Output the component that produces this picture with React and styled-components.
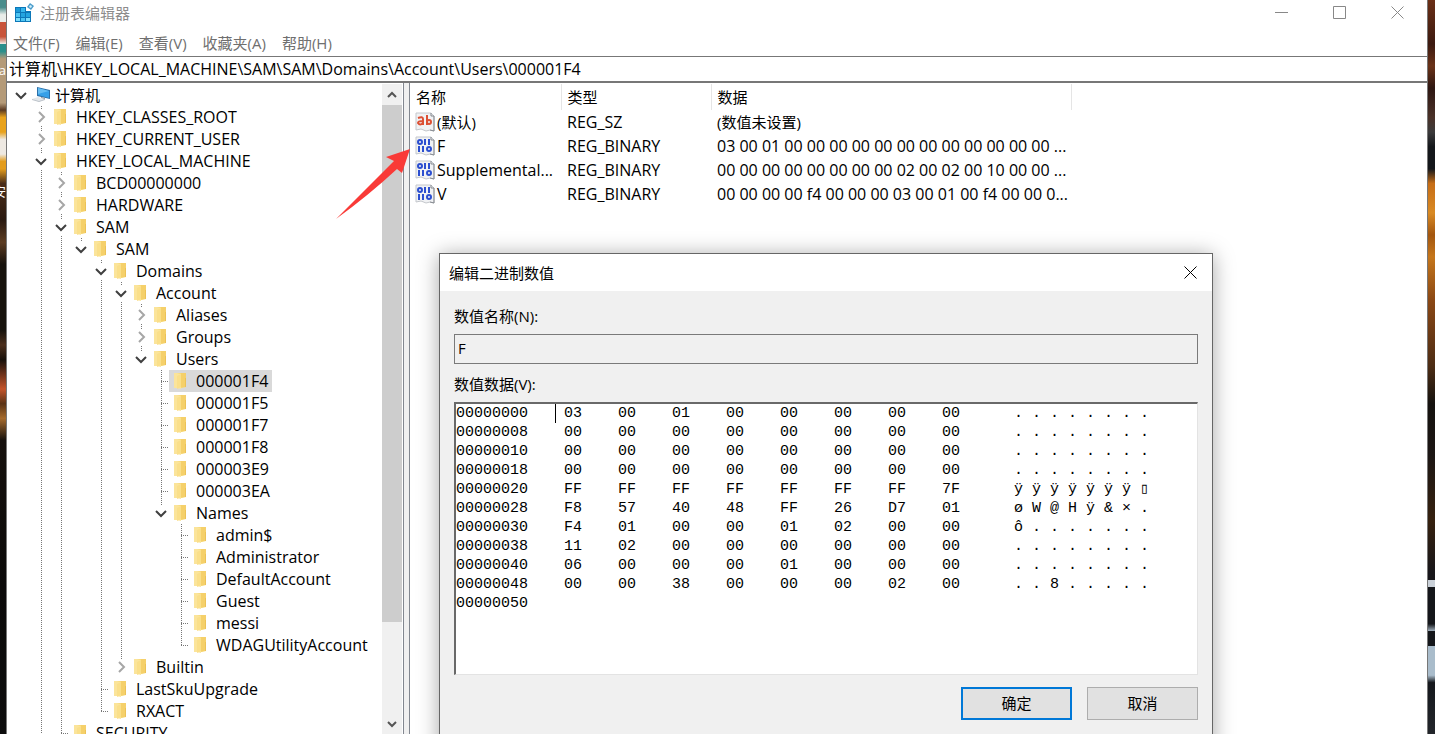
import React from 'react';
import styled, { createGlobalStyle, css } from "styled-components"

const GlobalStyle = createGlobalStyle`
  * {
    box-sizing: border-box;
  }

  body {
    margin: 0;
    background: #120e0b;
  }

  body, button, input {
    font-family: "Open Sans", "Noto Sans CJK SC", sans-serif;
    font-size: 15px;
    color: #000;
  }
`

const Desktop = styled.div`
  display: grid;
  grid-template-columns: 6px minmax(0, 1fr) 7px;
  height: 100vh;
  overflow: hidden;
`

const LeftWallpaper = styled.div`
  display: flex;
  flex-direction: column;
  align-items: flex-end;
  overflow: hidden;
  padding-top: 60px;
  gap: 101px;
  color: #fff;
  background: linear-gradient(
    #4a8d8c 0 1%, #e9ede9 2% 3%, #c8543a 3% 5%, #f0eeea 6%, #2a8f8c 6% 7%,
    #b49a78 8% 14%, #5b3a22 15%, #e8a21c 16% 18%, #eee9e2 19% 21%, #e39c1c 22% 23%,
    #4a2c18 25%, #2a1a10 30%, #5c3c22 33%, #17120c 36% 45%, #4c2f1c 47%, #17100a 49%,
    #c3532a 53%, #5a3315 55%, #a56a2c 57%, #15100c 60%, #0b0a09 80%, #0d0d0d 100%
  );
`

const WallpaperLabel = styled.span`
  font-size: 13px;
  line-height: 20px;
`

const RightWallpaper = styled.div`
  background: linear-gradient(
    #6b2f16 0%, #3c1a10 6%, #6a3218 9%, #2e1712 12%, #4a3128 16%, #3b3a3b 18%, #14171b 20% 23%,
    #c66d16 25%, #d98a24 29%, #a3560f 32%, #c5761b 35%, #8a4714 41%, #4c2c14 50%,
    #15120f 55%, #1c1614 62%, #36210f 71%, #17161a 78%, #17161a 79%, #c9d0d8 79% 80%,
    #14161a 80% 85%, #a6b6c4 86%, #14161a 86% 88%, #a9bccb 88% 92%, #15181d 93%, #23262b 100%
  );
`

const Window = styled.main`
  position: relative;
  display: flex;
  flex-direction: column;
  min-height: 0;
  background: #fff;
  border-left: 1px solid #777;
  border-right: 1px solid #777;
`

const TitleBar = styled.header`
  display: flex;
  align-items: center;
  height: 26px;
  padding: 0 1px 1px 7px;
  color: #8c8c8c;
`

const AppTitle = styled.h1`
  flex: 1;
  margin: 0 0 0 6px;
  font-size: 15px;
  font-weight: 400;
  line-height: 20px;
`

const WindowButton = styled.button`
  display: flex;
  align-items: center;
  justify-content: center;
  width: 58px;
  height: 25px;
  padding: 0;
  border: 0;
  background: none;
`

const MenuBar = styled.nav`
  display: flex;
  align-items: center;
  gap: 16px;
  height: 30px;
  padding: 4px 6px 0;
`

const MenuButton = styled.button`
  padding: 0;
  border: 0;
  background: none;
  color: #6f6f6f;
  line-height: 20px;
`

const AddressInput = styled.input`
  width: 100%;
  height: 27px;
  padding: 0 2px 2px;
  border: 0;
  border-top: 1px solid #777;
  border-bottom: 2px solid #777;
  outline: 0;
  font-size: 16px;
`

const Body = styled.div`
  display: flex;
  flex: 1;
  min-height: 0;
`

const TreePane = styled.section`
  display: flex;
  width: 397px;
  flex-shrink: 0;
  border-right: 1px solid #828790;
`

const Tree = styled.ul`
  flex: 1;
  min-width: 0;
  margin: 0;
  padding: 1px 0 0 4px;
  overflow: hidden;
  list-style: none;
`

const TreeRow = styled.li`
  display: flex;
  height: 22px;
`

const dotsDown = "repeating-linear-gradient(to bottom, #777 0 1px, transparent 1px 2px)"
const dotsRight = "repeating-linear-gradient(to right, #777 0 1px, transparent 1px 2px)"

const Guide = styled.span`
  width: 20px;
  flex-shrink: 0;
  ${({ $line }) => $line && css`
    background: ${dotsDown} 10px 0 / 1px 100% no-repeat;
  `}
`

const Branch = styled.span`
  width: 18px;
  flex-shrink: 0;
  background:
    ${dotsDown} 10px 0 / 1px ${({ $last }) => $last ? "12px" : "100%"} no-repeat,
    ${dotsRight} 10px 11px / 8px 1px no-repeat;
`

const Toggle = styled.button`
  display: flex;
  align-items: center;
  justify-content: center;
  width: 18px;
  flex-shrink: 0;
  padding: 0 0 0 1px;
  border: 0;
  background:
    ${dotsDown} 10px 0 / 1px ${({ $root }) => $root ? "0" : "3px"} no-repeat,
    ${dotsDown} 10px 20px / 1px ${({ $last }) => $last ? "0" : "2px"} no-repeat;
`

const KeyButton = styled.button`
  display: flex;
  align-items: center;
  gap: ${({ $root }) => $root ? "5px" : "9px"};
  padding: 0 4px 0 ${({ $root }) => $root ? "3px" : "5px"};
  border: 0;
  background: ${({ $selected }) => $selected ? "#d9d9d9" : "none"};
  font-size: ${({ $root }) => $root ? "15px" : "16px"};
  line-height: 22px;
  white-space: nowrap;
`

const Scrollbar = styled.div`
  display: flex;
  flex-direction: column;
  width: 20px;
  margin: 1px 1px 0 0;
  background: #f0f0f0;
`

const ScrollButton = styled.button`
  display: flex;
  align-items: center;
  justify-content: center;
  height: 21px;
  flex-shrink: 0;
  padding: 0;
  border: 0;
  background: #f0f0f0;
`

const ScrollTrack = styled.div`
  flex: 1;
`

const ScrollThumb = styled.div`
  height: 85%;
  background: #cdcdcd;
`

const Splitter = styled.div`
  width: 5px;
  background: #f0f0f0;
`

const ValuePane = styled.section`
  flex: 1;
  min-width: 0;
  padding-top: 1px;
  border-left: 1px solid #828790;
`

const ValueTable = styled.table`
  width: 661px;
  table-layout: fixed;
  border-collapse: collapse;
`

const ValueHead = styled.th`
  width: ${({ $width }) => $width};
  height: 26px;
  padding: 0 6px;
  border-right: 1px solid #e5e5e5;
  font-weight: 400;
  line-height: 20px;
  text-align: left;
`

const ValueCell = styled.td`
  height: 24px;
  padding: 0 0 0 6px;
  font-size: ${({ $hanzi }) => $hanzi ? "15px" : "16px"};
  line-height: 22px;
  white-space: nowrap;
`

const ValueName = styled.span`
  display: flex;
  align-items: center;
  gap: 2px;
  margin-left: -1px;
`

const Pointer = styled.svg`
  position: absolute;
  left: 327px;
  top: 146px;
  pointer-events: none;
`

const Dialog = styled.section`
  position: absolute;
  left: 432px;
  top: 253px;
  width: 774px;
  background: #f0f0f0;
  border: 1px solid #666;
  box-shadow: 0 2px 20px rgba(0, 0, 0, 0.35);
`

const DialogHeader = styled.header`
  display: flex;
  align-items: center;
  justify-content: space-between;
  height: 37px;
  padding: 0 1px 1px 9px;
  background: #fff;
`

const DialogTitle = styled.h2`
  margin: 0;
  font-size: 15px;
  font-weight: 400;
`

const CloseButton = styled(WindowButton)`
  width: 42px;
  height: 36px;
`

const DialogForm = styled.form`
  display: flex;
  flex-direction: column;
  padding: 14px 14px 36px;
`

const FieldLabel = styled.label`
  line-height: 22px;
`

const NameInput = styled.input`
  height: 30px;
  margin: 7px 0 9px;
  padding: 0 3px 2px;
  border: 1px solid #7a7a7a;
  outline: 0;
  background: #f0f0f0;
`

const HexBox = styled.div`
  height: 273px;
  margin-top: 7px;
  background: #fff;
  border: 1px solid #e3e3e3;
  border-top: 2px solid #696969;
  border-left: 2px solid #696969;
`

const HexTable = styled.table`
  table-layout: fixed;
  border-collapse: collapse;
  font-family: "Liberation Mono", "DejaVu Sans Mono", monospace;
  font-size: 15px;
  line-height: 19px;
`

const Offset = styled.th`
  width: 99px;
  height: 19px;
  padding: 0;
  font-weight: 400;
  text-align: left;
`

const Byte = styled.td`
  width: 54px;
  padding: 0 0 0 9px;
  box-shadow: ${({ $caret }) => $caret ? "inset 1px 0 #000" : "none"};
`

const Gap = styled.td`
  width: 27px;
  padding: 0;
`

const Char = styled.td`
  width: 18px;
  padding: 0;
`

const DialogActions = styled.div`
  display: flex;
  justify-content: flex-end;
  gap: 15px;
  margin-top: 12px;
`

const ActionButton = styled.button`
  width: 111px;
  height: 33px;
  padding: 0 0 2px;
  background: #e1e1e1;
  border: ${({ $primary }) => $primary ? "2px solid #0078d7" : "1px solid #adadad"};
`

// level, name, state ("open", "closed" or leaf), last of its siblings
const keys = [
  [0, "计算机", "open", true],
  [1, "HKEY_CLASSES_ROOT", "closed"],
  [1, "HKEY_CURRENT_USER", "closed"],
  [1, "HKEY_LOCAL_MACHINE", "open"],
  [2, "BCD00000000", "closed"],
  [2, "HARDWARE", "closed"],
  [2, "SAM", "open"],
  [3, "SAM", "open", true],
  [4, "Domains", "open"],
  [5, "Account", "open"],
  [6, "Aliases", "closed"],
  [6, "Groups", "closed"],
  [6, "Users", "open", true],
  [7, "000001F4"],
  [7, "000001F5"],
  [7, "000001F7"],
  [7, "000001F8"],
  [7, "000003E9"],
  [7, "000003EA"],
  [7, "Names", "open", true],
  [8, "admin$"],
  [8, "Administrator"],
  [8, "DefaultAccount"],
  [8, "Guest"],
  [8, "messi"],
  [8, "WDAGUtilityAccount", "", true],
  [5, "Builtin", "closed", true],
  [4, "LastSkuUpgrade"],
  [4, "RXACT", "", true],
  [2, "SECURITY"],
]

// levels whose line carries on past their open children
const lined = [1, 2, 4, 5]

const values = [
  ["(默认)", "REG_SZ", "(数值未设置)"],
  ["F", "REG_BINARY", "03 00 01 00 00 00 00 00 00 00 00 00 00 00 00 ..."],
  ["Supplemental...", "REG_BINARY", "00 00 00 00 00 00 00 00 02 00 02 00 10 00 00 ..."],
  ["V", "REG_BINARY", "00 00 00 00 f4 00 00 00 03 00 01 00 f4 00 00 0..."],
]

const hexRows = [
  ["00000000", "03 00 01 00 00 00 00 00", "........"],
  ["00000008", "00 00 00 00 00 00 00 00", "........"],
  ["00000010", "00 00 00 00 00 00 00 00", "........"],
  ["00000018", "00 00 00 00 00 00 00 00", "........"],
  ["00000020", "FF FF FF FF FF FF FF 7F", "ÿÿÿÿÿÿÿ▯"],
  ["00000028", "F8 57 40 48 FF 26 D7 01", "øW@Hÿ&×."],
  ["00000030", "F4 01 00 00 01 02 00 00", "ô......."],
  ["00000038", "11 02 00 00 00 00 00 00", "........"],
  ["00000040", "06 00 00 00 01 00 00 00", "........"],
  ["00000048", "00 00 38 00 00 00 02 00", "..8....."],
]

const RegeditIcon = () => (
  <svg width="20" height="20" viewBox="0 0 20 20">
    <path d="M1 4h11v4h5v11H1z" fill="#0c77b8" />
    <path d="M2 5h4v4H2z" fill="#1b9ad8" />
    <path d="M7 5h4v4H7z" fill="#35b5ec" />
    <path d="M2 10h4v4H2zM7 15h4v3H7z" fill="#4cc4f2" />
    <path d="M7 10h4v4H7zM12 10h4v4h-4z" fill="#23a4e0" />
    <path d="M2 15h4v3H2zM12 15h4v3h-4z" fill="#7bdcfa" />
    <path d="M16 0l4 3-3 4-4-3z" fill="#4a9ccb" />
    <path d="M16 2l2 1-1 2-2-1z" fill="#d5f0fb" />
  </svg>
)

const ComputerIcon = () => (
  <svg width="18" height="18" viewBox="0 0 18 18">
    <path d="M5 1l13 3v9L5 10z" fill="#2b6fa8" />
    <path d="M6 2l11 3v7L6 9z" fill="#36a0e8" />
    <path d="M6 2l11 3-11 3z" fill="#66bdf2" />
    <path d="M9 11l4 1v2l-4-1z" fill="#8a9299" />
    <path d="M0 13l6-2 7 2-6 3z" fill="#e3e7ea" />
    <path d="M0 13l7 2 6-2v1l-6 2-7-2z" fill="#bcc2c9" />
  </svg>
)

const FolderIcon = () => (
  <svg width="13" height="18" viewBox="0 0 13 18">
    <path d="M0 1h8l4 1v13l-4 1H0z" fill="#f7d774" />
    <path d="M7 1h5v14H7z" fill="#f5d06a" />
    <path d="M0 1h3l4 1v15l-4-1H0z" fill="#fbe49a" />
    <path d="M3 4l4-2v13l-4 2z" fill="#fadf8a" />
    <path d="M11 6h1v9h-1z" fill="#ecc256" />
  </svg>
)

const Chevron = ({ open }) => (
  <svg width="12" height="12" viewBox="0 0 12 12" fill="none" strokeWidth="2">
    {open
      ? <path d="M1 4l5 5 5-5" stroke="#404040" />
      : <path d="M4 1l5 5-5 5" stroke="#a6a6a6" />}
  </svg>
)

const ScrollArrow = ({ d }) => (
  <svg width="10" height="8" viewBox="0 0 10 8" fill="none" stroke="#555" strokeWidth="2">
    <path d={d} />
  </svg>
)

const CrossIcon = ({ color }) => (
  <svg width="13" height="13" viewBox="0 0 13 13" stroke={color}>
    <path d="M.5.5l12 12M12.5.5l-12 12" />
  </svg>
)

const ValueIcon = ({ binary }) => (
  <svg width="20" height="20" viewBox="0 0 20 20" fill="none">
    <path d="M1 1h15l3 3v15l-4-1-4 1-5-2-5 1z" fill="#f1f2f4" stroke="#c4c7cc" />
    <path d="M16 1v3h3M19 4v15l-4-1" stroke="#85898f" />
    {binary ? (
      <g stroke="#2c4fd0" strokeWidth="2">
        <circle cx="5" cy="6" r="2" />
        <path d="M10 3v6M14 3v6M4 10v6M8 10v6" />
        <circle cx="14" cy="13" r="2" />
      </g>
    ) : (
      <g stroke="#dc5034" strokeWidth="2">
        <path d="M3 6q5-2 5 1v6M8 9q-5 0-5 2 2 3 5 0M12 3v10" />
        <circle cx="14" cy="10" r="2" />
      </g>
    )}
  </svg>
)

const TreeItem = ({ item }) => {
  const [level, name, state, last] = item
  return (
    <TreeRow>
      {Array.from({ length: level }, (_, i) => (
        <Guide key={i} $line={lined.includes(i)} />
      ))}
      {state ? (
        <Toggle type="button" aria-label={name} $root={level === 0} $last={last}>
          <Chevron open={state === "open"} />
        </Toggle>
      ) : (
        <Branch $last={last} />
      )}
      <KeyButton type="button" $root={level === 0} $selected={name === "000001F4"}>
        {level === 0 ? <ComputerIcon /> : <FolderIcon />}
        {name}
      </KeyButton>
    </TreeRow>
  )
}

const EditDialog = () => (
  <Dialog role="dialog" aria-labelledby="dialog-title">
    <DialogHeader>
      <DialogTitle id="dialog-title">编辑二进制数值</DialogTitle>
      <CloseButton type="button" aria-label="Close"><CrossIcon color="#000" /></CloseButton>
    </DialogHeader>
    <DialogForm>
      <FieldLabel htmlFor="value-name">数值名称(N):</FieldLabel>
      <NameInput id="value-name" readOnly value="F" />
      <FieldLabel as="span" id="value-data">数值数据(V):</FieldLabel>
      <HexBox>
        <HexTable aria-labelledby="value-data">
          <tbody>
            {hexRows.map(([offset, bytes, text], row) => (
              <tr key={offset}>
                <Offset scope="row">{offset}</Offset>
                {bytes.split(" ").map((b, i) => (
                  <Byte key={i} $caret={row === 0 && i === 0}>{b}</Byte>
                ))}
                <Gap />
                {[...text].map((c, i) => <Char key={i}>{c}</Char>)}
              </tr>
            ))}
            <tr>
              <Offset scope="row">00000050</Offset>
            </tr>
          </tbody>
        </HexTable>
      </HexBox>
      <DialogActions>
        <ActionButton type="button" $primary>确定</ActionButton>
        <ActionButton type="button">取消</ActionButton>
      </DialogActions>
    </DialogForm>
  </Dialog>
)

const App = () => {
  return (
    <Desktop>
      <GlobalStyle />
      <LeftWallpaper>
        <WallpaperLabel>a</WallpaperLabel>
        <WallpaperLabel>安</WallpaperLabel>
      </LeftWallpaper>
      <Window>
        <TitleBar>
          <RegeditIcon />
          <AppTitle>注册表编辑器</AppTitle>
          <WindowButton type="button" aria-label="Minimize">
            <svg width="13" height="13" stroke="#888"><path d="M0 6.5h13" /></svg>
          </WindowButton>
          <WindowButton type="button" aria-label="Maximize">
            <svg width="13" height="13" stroke="#888" fill="none"><path d="M.5.5h12v12H.5z" /></svg>
          </WindowButton>
          <WindowButton type="button" aria-label="Close"><CrossIcon color="#888" /></WindowButton>
        </TitleBar>
        <MenuBar>
          {["文件(F)", "编辑(E)", "查看(V)", "收藏夹(A)", "帮助(H)"].map((m) => (
            <MenuButton type="button" key={m}>{m}</MenuButton>
          ))}
        </MenuBar>
        <AddressInput
          aria-label="Address"
          defaultValue={"计算机\\HKEY_LOCAL_MACHINE\\SAM\\SAM\\Domains\\Account\\Users\\000001F4"}
        />
        <Body>
          <TreePane>
            <Tree>
              {keys.map((item, i) => <TreeItem key={i} item={item} />)}
            </Tree>
            <Scrollbar>
              <ScrollButton type="button" aria-label="Scroll up">
                <ScrollArrow d="M1 6l4-4 4 4" />
              </ScrollButton>
              <ScrollTrack><ScrollThumb /></ScrollTrack>
              <ScrollButton type="button" aria-label="Scroll down">
                <ScrollArrow d="M1 2l4 4 4-4" />
              </ScrollButton>
            </Scrollbar>
          </TreePane>
          <Splitter />
          <ValuePane>
            <ValueTable>
              <thead>
                <tr>
                  <ValueHead $width="151px">名称</ValueHead>
                  <ValueHead $width="150px">类型</ValueHead>
                  <ValueHead $width="360px">数据</ValueHead>
                </tr>
              </thead>
              <tbody>
                {values.map(([name, type, data]) => (
                  <tr key={name}>
                    <ValueCell $hanzi={type === "REG_SZ"}>
                      <ValueName>
                        <ValueIcon binary={type === "REG_BINARY"} />
                        {name}
                      </ValueName>
                    </ValueCell>
                    <ValueCell>{type}</ValueCell>
                    <ValueCell $hanzi={type === "REG_SZ"}>{data}</ValueCell>
                  </tr>
                ))}
              </tbody>
            </ValueTable>
          </ValuePane>
        </Body>
        <Pointer width="80" height="76" viewBox="334 146 80 76">
          <path d="M410 149l-24 8 8 4-58 58q33-24 61-50l5 4z" fill="#f93a37" />
        </Pointer>
        <EditDialog />
      </Window>
      <RightWallpaper />
    </Desktop>
  )
}

export default App
